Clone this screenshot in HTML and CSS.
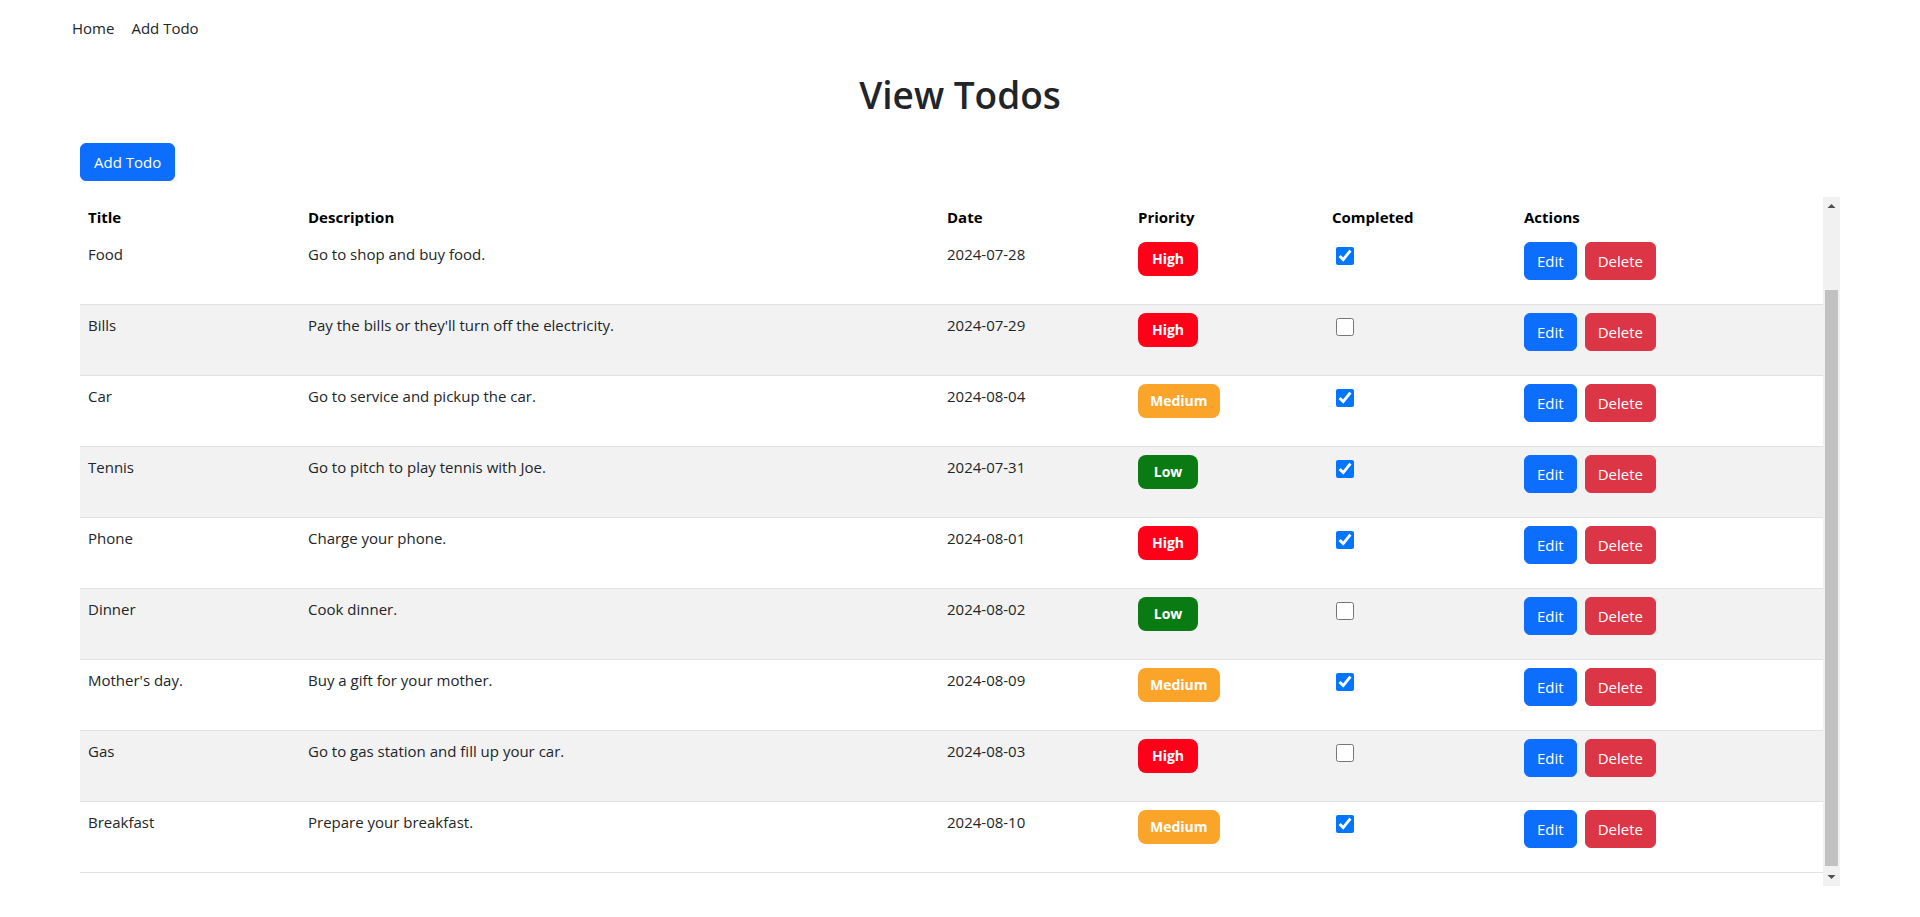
FILE: index.html
```html
<!DOCTYPE html>
<html lang="en">
<head>
<meta charset="utf-8">
<title>View Todos</title>
<link rel="stylesheet" href="styles.css">
</head>
<body>
<nav class="topnav">
  <a class="nav-link" href="#">Home</a>
  <a class="nav-link" href="#">Add Todo</a>
</nav>
<main class="page">
  <h1 class="page-title">View Todos</h1>
  <button class="btn btn-primary" type="button">Add Todo</button>
  <div class="table-frame">
    <div class="table-scroll">
      <div class="table-inner">
        <table class="todo-table">
          <colgroup>
            <col class="c-title"><col class="c-desc"><col class="c-date"><col class="c-prio"><col class="c-done"><col class="c-act">
          </colgroup>
          <thead>
            <tr><th>Title</th><th>Description</th><th>Date</th><th>Priority</th><th>Completed</th><th>Actions</th></tr>
          </thead>
          <tbody>
            <tr>
              <td>Food</td><td>Go to shop and buy food.</td><td>2024-07-28</td>
              <td><span class="badge badge-high">High</span></td>
              <td><input class="check" type="checkbox" checked></td>
              <td><div class="actions"><button class="btn btn-primary" type="button">Edit</button><button class="btn btn-danger" type="button">Delete</button></div></td>
            </tr>
            <tr>
              <td>Bills</td><td>Pay the bills or they'll turn off the electricity.</td><td>2024-07-29</td>
              <td><span class="badge badge-high">High</span></td>
              <td><input class="check" type="checkbox"></td>
              <td><div class="actions"><button class="btn btn-primary" type="button">Edit</button><button class="btn btn-danger" type="button">Delete</button></div></td>
            </tr>
            <tr>
              <td>Car</td><td>Go to service and pickup the car.</td><td>2024-08-04</td>
              <td><span class="badge badge-medium">Medium</span></td>
              <td><input class="check" type="checkbox" checked></td>
              <td><div class="actions"><button class="btn btn-primary" type="button">Edit</button><button class="btn btn-danger" type="button">Delete</button></div></td>
            </tr>
            <tr>
              <td>Tennis</td><td>Go to pitch to play tennis with Joe.</td><td>2024-07-31</td>
              <td><span class="badge badge-low">Low</span></td>
              <td><input class="check" type="checkbox" checked></td>
              <td><div class="actions"><button class="btn btn-primary" type="button">Edit</button><button class="btn btn-danger" type="button">Delete</button></div></td>
            </tr>
            <tr>
              <td>Phone</td><td>Charge your phone.</td><td>2024-08-01</td>
              <td><span class="badge badge-high">High</span></td>
              <td><input class="check" type="checkbox" checked></td>
              <td><div class="actions"><button class="btn btn-primary" type="button">Edit</button><button class="btn btn-danger" type="button">Delete</button></div></td>
            </tr>
            <tr>
              <td>Dinner</td><td>Cook dinner.</td><td>2024-08-02</td>
              <td><span class="badge badge-low">Low</span></td>
              <td><input class="check" type="checkbox"></td>
              <td><div class="actions"><button class="btn btn-primary" type="button">Edit</button><button class="btn btn-danger" type="button">Delete</button></div></td>
            </tr>
            <tr>
              <td>Mother's day.</td><td>Buy a gift for your mother.</td><td>2024-08-09</td>
              <td><span class="badge badge-medium">Medium</span></td>
              <td><input class="check" type="checkbox" checked></td>
              <td><div class="actions"><button class="btn btn-primary" type="button">Edit</button><button class="btn btn-danger" type="button">Delete</button></div></td>
            </tr>
            <tr>
              <td>Gas</td><td>Go to gas station and fill up your car.</td><td>2024-08-03</td>
              <td><span class="badge badge-high">High</span></td>
              <td><input class="check" type="checkbox"></td>
              <td><div class="actions"><button class="btn btn-primary" type="button">Edit</button><button class="btn btn-danger" type="button">Delete</button></div></td>
            </tr>
            <tr>
              <td>Breakfast</td><td>Prepare your breakfast.</td><td>2024-08-10</td>
              <td><span class="badge badge-medium">Medium</span></td>
              <td><input class="check" type="checkbox" checked></td>
              <td><div class="actions"><button class="btn btn-primary" type="button">Edit</button><button class="btn btn-danger" type="button">Delete</button></div></td>
            </tr>
          </tbody>
        </table>
      </div>
    </div>
    <div class="scrollbar" aria-hidden="true">
      <div class="sb-btn"><svg width="17" height="17" viewBox="0 0 17 17"><polygon points="4.5,11 12.5,11 8.5,7" fill="#505050"/></svg></div>
      <div class="sb-track"><div class="sb-thumb"></div></div>
      <div class="sb-btn"><svg width="17" height="17" viewBox="0 0 17 17"><polygon points="4.5,6 12.5,6 8.5,10" fill="#505050"/></svg></div>
    </div>
  </div>
</main>
</body>
</html>
```
FILE: styles.css
```css
* { box-sizing: border-box; }

html, body {
  margin: 0;
  padding: 0;
  background: #fff;
}

body {
  font-family: "Open Sans", "Noto Sans", "Liberation Sans", sans-serif;
  font-size: 15px;
  line-height: 24px;
  color: #212529;
}

.topnav {
  display: flex;
  gap: 17px;
  padding: 16px 0 0 72px;
  height: 40px;
}

.nav-link {
  color: #212529;
  text-decoration: none;
}

.page {
  margin: 0 80px;
  display: flex;
  flex-direction: column;
  align-items: flex-start;
}

.page-title {
  align-self: stretch;
  text-align: center;
  margin: 31px 0 24px;
  font-size: 37px;
  line-height: 48px;
  font-weight: 600;
  color: #212529;
}

.btn {
  font-family: inherit;
  font-size: 15px;
  line-height: 24px;
  height: 38px;
  padding: 6px 12px;
  border: 1px solid transparent;
  border-radius: 6px;
  color: #fff;
  cursor: pointer;
}

.btn-primary { background: #0d6efd; border-color: #0d6efd; }
.btn-danger { background: #dc3545; border-color: #dc3545; }

.page > .btn-primary { padding: 6px 13px; }

/* table area with its scrollbar column */
.table-frame {
  margin-top: 16px;
  align-self: stretch;
  height: 689px;
  display: flex;
}

.table-scroll {
  flex: 1;
  min-width: 0;
  overflow-y: auto;
  scrollbar-width: none;
  display: flex;
  flex-direction: column-reverse;
}

.table-scroll::-webkit-scrollbar { display: none; }

.table-inner { flex-shrink: 0; }

.scrollbar {
  width: 17px;
  flex: 0 0 17px;
  display: flex;
  flex-direction: column;
  background: #f1f1f1;
}

.sb-btn {
  height: 17px;
  flex: 0 0 17px;
}

.sb-btn svg { display: block; }

.sb-track {
  flex: 1;
  display: flex;
  padding: 76px 2px 3px 2px;
}

.sb-thumb {
  flex: 1;
  background: #c1c1c1;
}

.todo-table {
  width: 100%;
  table-layout: fixed;
  border-collapse: separate;
  border-spacing: 0;
  margin-bottom: 13px;
}

.c-title { width: 220px; }
.c-desc { width: 639px; }
.c-date { width: 191px; }
.c-prio { width: 194px; }
.c-done { width: 192px; }

.todo-table th {
  position: sticky;
  top: 0;
  z-index: 1;
  background: #fff;
  text-align: left;
  font-weight: 700;
  color: #000;
  padding: 8px;
  height: 40px;
  vertical-align: top;
}

.todo-table td {
  padding: 8px;
  vertical-align: top;
  border-bottom: 1px solid #dee2e6;
}

.todo-table tbody tr:nth-child(even) td { background: #f2f2f2; }

.badge {
  display: inline-block;
  min-width: 60px;
  text-align: center;
  padding: 5px 12px;
  border-radius: 8px;
  color: #fff;
  font-weight: 700;
  font-size: 14px;
  line-height: 24px;
}

.badge-high { background: #ff0019; }
.badge-medium { background: #fba42a; }
.badge-low { background: #0a7a12; }

.check {
  display: block;
  width: 18px;
  height: 18px;
  margin: 5px 0 0 4px;
}

.actions {
  display: flex;
  gap: 8px;
  margin-bottom: 16px;
}
```
